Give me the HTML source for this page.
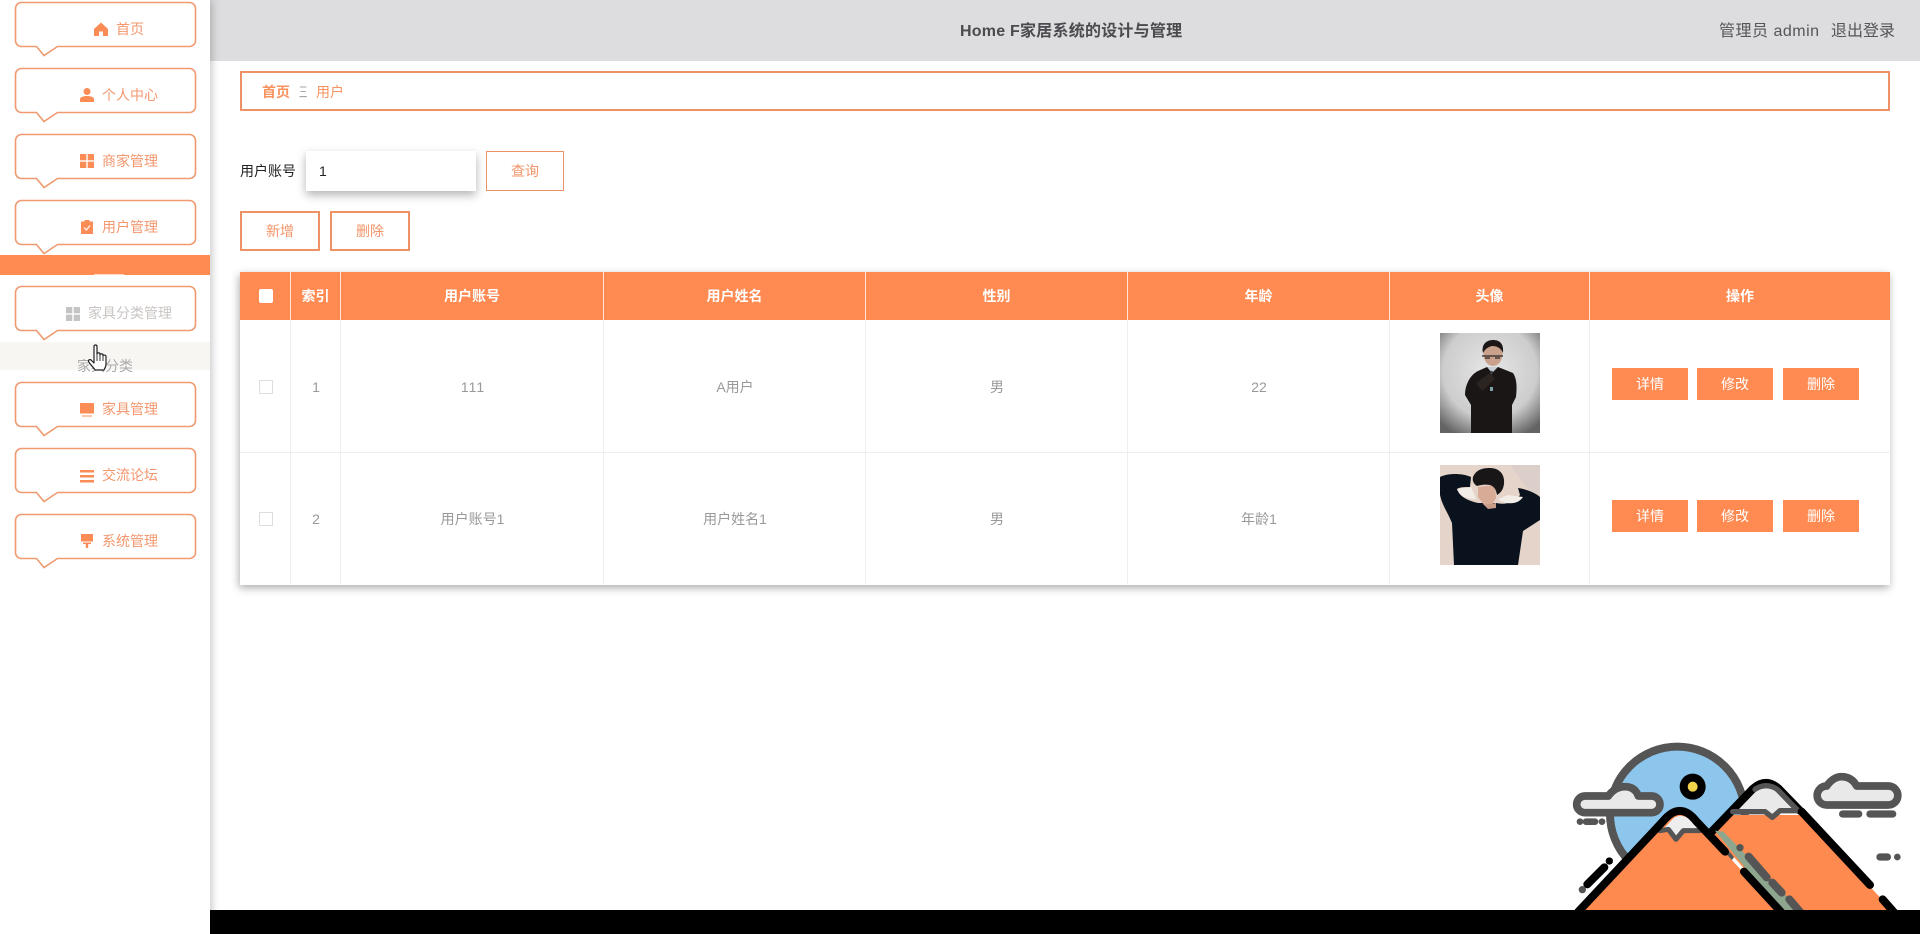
<!DOCTYPE html>
<html lang="zh-CN">
<head>
<meta charset="utf-8">
<title>Home F家居系统的设计与管理</title>
<style>
*{box-sizing:border-box;margin:0;padding:0}
html,body{width:1920px;height:934px;overflow:hidden;background:#fff;font-family:"Liberation Sans","Noto Sans CJK SC",sans-serif;font-size:14px;font-kerning:none}
.abs,.sb,.hd,.box,.t,.ic,.bc,.btn,.in,.th,.td,.v,.h,.ab,.cb,.av{position:absolute}
.sb{left:0;top:0;width:210px;height:934px;background:#fff;box-shadow:2px 0 8px rgba(0,0,0,.22);z-index:5}
.hd{left:210px;top:0;width:1710px;height:61px;background:#dddcde;color:#4a4a4f}
.t{line-height:20px;color:#f4976e;white-space:nowrap}
.ic{width:14px;height:14px;fill:#fc8c55}
.bc{left:240px;top:71px;width:1650px;height:40px;border:2px solid #ec9264}
.bc span{position:absolute;top:9px;line-height:20px;color:#f8935f}
.btn{text-align:center;color:#f39469;background:#fff;line-height:36px}
.in{left:306px;top:151px;width:170px;height:40px;background:#fff;box-shadow:0 4px 9px rgba(0,0,0,.3);line-height:40px;padding-left:13px;color:#222}
.tb{position:absolute;left:240px;top:272px;width:1650px;height:313px;background:#fff;box-shadow:-1px 3px 8px rgba(0,0,0,.32)}
.th{top:0;height:48px;background:#ff8b52;color:#fff;font-weight:bold;text-align:center;line-height:48px;border-right:1px solid #ffe3d3}
.v{top:48px;width:1px;height:264px;background:#eeeeee}
.h{left:0;top:180px;width:1650px;height:1px;background:#eeeeee}
.td{height:20px;line-height:20px;color:#999;text-align:center}
.ab{width:76px;height:32px;line-height:32px;background:#ff8b52;color:#fff;text-align:center}
.cb{left:19px;width:14px;height:14px;border:1px solid #dedede;background:#fff}
.av{left:1200px;width:100px;height:100px}
</style>
</head>
<body>

<div class="hd">
  <div class="abs" style="left:750px;top:22px;font-size:16px;font-weight:bold;line-height:20px;white-space:nowrap;letter-spacing:.23px">Home F家居系统的设计与管理</div>
  <div class="abs" style="left:1509px;top:22px;font-size:16px;line-height:20px;white-space:nowrap;color:#55555a;letter-spacing:.5px">管理员 admin</div>
  <div class="abs" style="left:1621px;top:22px;font-size:16px;line-height:20px;white-space:nowrap;color:#55555a">退出登录</div>
</div>

<div class="sb">
  <svg class="abs" style="left:0;top:0" width="210" height="600" fill="#fff" stroke="#f09a70" stroke-width="1.600">
    <defs><path id="bub" d="M21 1H175a6 6 0 0 1 6 6V39a6 6 0 0 1-6 6H43L29.500 54 22 45H7a6 6 0 0 1-6-6V7a6 6 0 0 1 6-6Z"/></defs>
    <use href="#bub" x="14.500" y="1.500"/>
    <use href="#bub" x="14.500" y="67.500"/>
    <use href="#bub" x="14.500" y="133.500"/>
    <use href="#bub" x="14.500" y="199.500"/>
    <use href="#bub" x="14.500" y="285.500"/>
    <use href="#bub" x="14.500" y="381.500"/>
    <use href="#bub" x="14.500" y="447.500"/>
    <use href="#bub" x="14.500" y="513.500"/>
  </svg>
  <div class="abs" style="left:0;top:255px;width:210px;height:20px;background:#ff8b52"></div>
  <div class="abs" style="left:94px;top:273.500px;width:30px;height:1.500px;background:#ffd9c4"></div>
  <div class="abs" style="left:0;top:342px;width:210px;height:28px;background:#f8f6f3"></div>

  <svg class="ic" style="left:94px;top:22px" viewBox="0 0 14 14"><path d="M7 0.500 14 7V14H9V9.500H5V14H0V7Z"/></svg>
  <div class="t" style="left:116px;top:19px">首页</div>

  <svg class="ic" style="left:80px;top:88px" viewBox="0 0 14 14"><circle cx="7" cy="3.500" r="3.500"/><path d="M0 14V11.500C0 9 3 8 7 8s7 1 7 3.500V14Z"/></svg>
  <div class="t" style="left:102px;top:85px">个人中心</div>

  <svg class="ic" style="left:80px;top:154px" viewBox="0 0 14 14"><rect width="6.300" height="6.300"/><rect x="7.700" width="6.300" height="6.300"/><rect y="7.700" width="6.300" height="6.300"/><rect x="7.700" y="7.700" width="6.300" height="6.300"/></svg>
  <div class="t" style="left:102px;top:151px">商家管理</div>

  <svg class="ic" style="left:80px;top:220px" viewBox="0 0 14 14"><path d="M1 1.500H4.500V0H9.500V1.500H13V14H1Z"/><path d="M4 7.500 6.300 10 10 5.500" fill="none" stroke="#fff" stroke-width="1.100"/></svg>
  <div class="t" style="left:102px;top:217px">用户管理</div>

  <svg class="ic" style="left:66px;top:307px;fill:#c4c4c4" viewBox="0 0 14 14"><rect width="6.300" height="6.300"/><rect x="7.700" width="6.300" height="6.300"/><rect y="7.700" width="6.300" height="6.300"/><rect x="7.700" y="7.700" width="6.300" height="6.300"/></svg>
  <div class="t" style="left:88px;top:303px;color:#c9c5c3">家具分类管理</div>

  <div class="t" style="left:77px;top:356px;color:#aaa">家具分类</div>

  <svg class="ic" style="left:80px;top:403px" viewBox="0 0 14 14"><path d="M0 0H14V10.500H0Z"/><path d="M2 12.500H12V13.500H2Z"/></svg>
  <div class="t" style="left:102px;top:399px">家具管理</div>

  <svg class="ic" style="left:80px;top:469px" viewBox="0 0 14 14"><path d="M0 1H14V3.500H0ZM0 6H14V8.500H0ZM0 11H14V13.500H0Z"/></svg>
  <div class="t" style="left:102px;top:465px">交流论坛</div>

  <svg class="ic" style="left:80px;top:534px" viewBox="0 0 14 14"><path d="M1 0H13V7.500H1Z"/><path d="M3 8.500H11V10H8.200V14H5.800V10H3Z"/></svg>
  <div class="t" style="left:102px;top:531px">系统管理</div>

  <svg class="abs" style="left:87px;top:344px;z-index:3" width="22" height="30" viewBox="0 0 22 30">
    <path d="M7 2.500c0-2 3-2 3 0V10c0-1.500 3-1.500 3 0v1c0-1.500 3-1.500 3 0v1c0-1.300 3-1.300 3 .500v7.500c0 3-1 4-2 6H8c-1-2-6-7-6.500-8.500-.5-2 2-2.500 3-1L7 19Z" fill="#fff" stroke="#222" stroke-width="1.200" stroke-linejoin="round"/>
    <path d="M10 10v7M13 11v6M16 12v5" stroke="#222" stroke-width=".9"/>
  </svg>
</div>

<div class="bc">
  <span style="left:20px;font-weight:bold">首页</span>
  <span style="left:57px;color:#a9a39f;display:block;width:14px;text-align:center;transform:scaleX(.6);transform-origin:0 50%">三</span>
  <span style="left:74px">用户</span>
</div>

<div class="abs" style="left:240px;top:161px;line-height:20px;color:#222">用户账号</div>
<div class="in">1</div>
<div class="btn" style="left:486px;top:151px;width:78px;height:40px;border:1px solid #ec9264;line-height:38px">查询</div>
<div class="btn" style="left:240px;top:211px;width:80px;height:40px;border:2px solid #ec9264">新增</div>
<div class="btn" style="left:330px;top:211px;width:80px;height:40px;border:2px solid #ec9264">删除</div>

<div class="tb">
  <div class="th" style="left:0;width:51px"></div>
  <div class="abs" style="left:19px;top:17px;width:14px;height:14px;background:#fff;border-radius:2px"></div>
  <div class="th" style="left:51px;width:50px">索引</div>
  <div class="th" style="left:101px;width:263px">用户账号</div>
  <div class="th" style="left:364px;width:262px">用户姓名</div>
  <div class="th" style="left:626px;width:262px">性别</div>
  <div class="th" style="left:888px;width:262px">年龄</div>
  <div class="th" style="left:1150px;width:200px">头像</div>
  <div class="th" style="left:1350px;width:300px;border-right:0">操作</div>

  <div class="v" style="left:50px"></div>
  <div class="v" style="left:100px"></div>
  <div class="v" style="left:363px"></div>
  <div class="v" style="left:625px"></div>
  <div class="v" style="left:887px"></div>
  <div class="v" style="left:1149px"></div>
  <div class="v" style="left:1349px"></div>
  <div class="h"></div>

  <div class="cb" style="top:108px"></div>
  <div class="td" style="left:51px;width:50px;top:105px">1</div>
  <div class="td" style="left:101px;width:263px;top:105px">111</div>
  <div class="td" style="left:364px;width:262px;top:105px">A用户</div>
  <div class="td" style="left:626px;width:262px;top:105px">男</div>
  <div class="td" style="left:888px;width:262px;top:105px">22</div>

  <div class="cb" style="top:240px"></div>
  <div class="td" style="left:51px;width:50px;top:237px">2</div>
  <div class="td" style="left:101px;width:263px;top:237px">用户账号1</div>
  <div class="td" style="left:364px;width:262px;top:237px">用户姓名1</div>
  <div class="td" style="left:626px;width:262px;top:237px">男</div>
  <div class="td" style="left:888px;width:262px;top:237px">年龄1</div>

  <svg class="av" style="top:61px" viewBox="0 0 100 100">
    <defs><radialGradient id="g1" cx="50%" cy="38%" r="72%"><stop offset="0" stop-color="#e6e6e6"/><stop offset=".65" stop-color="#cdcdcd"/><stop offset="1" stop-color="#636363"/></radialGradient></defs>
    <rect width="100" height="100" fill="url(#g1)"/>
    <path d="M31 100V72L25 62C25 52 30 42 38 38L47 34H58L73 40C77 46 77 54 76 64L72 72V100Z" fill="#1a1616"/>
    <ellipse cx="53" cy="21" rx="9.500" ry="12" fill="#c9a08c"/>
    <path d="M43 20C41 11 47 7 53 7C60 7 64 11 63 20C61 15 57 13 52 13C48 14 45 16 43 20Z" fill="#1c1716"/>
    <path d="M42 23H63M45 25h5M55 25h5" stroke="#2a2624" stroke-width="1.200"/>
    <path d="M47 34L52 40L58 34Z" fill="#c8cdd3"/>
    <path d="M52 38L50 44" stroke="#3a4452" stroke-width="2"/>
    <path d="M36 50L50 40L55 46L42 58Z" fill="#2b2421"/>
    <rect x="50" y="54" width="3" height="4" fill="#7fa0a8"/>
  </svg>
  <svg class="av" style="top:193px" viewBox="0 0 100 100">
    <rect width="100" height="100" fill="#e5d4ca"/>
    <path d="M70 0H100V30L88 24Z" fill="#dccfc9"/>
    <path d="M0 12C8 8 22 8 31 12L30 22C24 22 20 22 17 24C20 33 30 36 38 38H56C65 40 74 38 80 30L78 23C86 24 96 28 100 32V55L83 66L78 100H14L12 58C8 48 2 40 0 30Z" fill="#09121d"/>
    <path d="M17 24C24 22 28 24 31 22L36 34C28 34 20 32 17 24ZM83 32L68 30L58 34C66 40 78 40 83 32Z" fill="#f3ede7"/>
    <path d="M38 22L55 20L56 33L52 40H44L38 32Z" fill="#d8ab96"/>
    <path d="M33 12C36 5 42 3 50 3C60 3 65 10 64 19C63 26 60 28 57 30C56 25 55 22 50 20C45 19 40 20 37 21C34 19 32 16 33 12Z" fill="#191618"/>
    <path d="M44 40L56 38V43L48 44Z" fill="#c99c88"/>
  </svg>
</div>

<div class="ab" style="left:1612px;top:368px">详情</div>
<div class="ab" style="left:1697px;top:368px">修改</div>
<div class="ab" style="left:1783px;top:368px">删除</div>
<div class="ab" style="left:1612px;top:500px">详情</div>
<div class="ab" style="left:1697px;top:500px">修改</div>
<div class="ab" style="left:1783px;top:500px">删除</div>

<svg class="abs" style="left:1540px;top:720px" width="380" height="214" viewBox="0 0 1140 642" stroke-linecap="round" stroke-linejoin="round">
  <circle cx="412" cy="282" r="202" fill="#8dc6ec" stroke="#555" stroke-width="24"/>
  <circle cx="458" cy="200" r="27" fill="#f3d44b" stroke="#000" stroke-width="24"/>
  <path d="M135 228H205Q225 200 255 200Q285 200 295 228H335A25 25 0 0 1 335 278H135A25 25 0 0 1 135 228Z" fill="#e9e9e9" stroke="#555" stroke-width="23"/>
  <circle cx="120" cy="305" r="10" fill="#555"/><path d="M138 305H165" stroke="#555" stroke-width="20"/><circle cx="186" cy="305" r="10" fill="#555"/>
  <path d="M860 198Q880 170 905 170Q935 170 950 198H1045A28 28 0 0 1 1045 255H860A28 28 0 0 1 860 198Z" fill="#e9e9e9" stroke="#555" stroke-width="23"/>
  <path d="M908 282H956M990 282H1058" stroke="#555" stroke-width="22"/>
  <path d="M1020 411H1042" stroke="#555" stroke-width="22"/><circle cx="1072" cy="411" r="10" fill="#555"/>
  <path d="M555 285H790L1060 575H725L520 340Z" fill="#ff8a50"/>
  <path d="M575 275L640 205Q678 175 715 205L780 275Q745 262 720 268L697 290L680 270Q630 262 575 275Z" fill="#e9e9e9"/>
  <path d="M515 335L640 205Q678 172 715 205L780 272" fill="none" stroke="#000" stroke-width="24"/>
  <path d="M645 208Q678 186 712 208L772 270" fill="none" stroke="#555" stroke-width="16"/>
  <path d="M578 275H675L697 292L720 272H775" fill="none" stroke="#555" stroke-width="16"/>
  <path d="M785 275L990 495M1028 538L1065 580" fill="none" stroke="#000" stroke-width="24"/>
  <path d="M525 332L550 335L800 590H735Z" fill="#8ea58e"/>
  <circle cx="600" cy="383" r="11" fill="#555"/>
  <path d="M626 410L680 472M697 488L725 518M748 538L788 585" stroke="#555" stroke-width="24"/>
  <path d="M115 575L368 305Q420 240 470 305L640 490L722 575Z" fill="#ff8a50"/>
  <path d="M372 325L400 295Q420 280 445 295L475 328Q450 322 430 340L408 358L388 335Z" fill="#eeeeee"/>
  <path d="M360 332L385 328L408 358L430 332L480 332" fill="none" stroke="#555" stroke-width="15"/>
  <path d="M115 575L368 305Q420 240 470 305L555 395M612 455L725 578" fill="none" stroke="#000" stroke-width="24"/>
  <path d="M142 493L193 442" stroke="#000" stroke-width="24"/>
  <circle cx="208" cy="423" r="11" fill="#000"/>
  <circle cx="127" cy="509" r="11" fill="#555"/>
</svg>

<div class="abs" style="left:210px;top:910px;width:1710px;height:24px;background:#000"></div>

</body>
</html>
